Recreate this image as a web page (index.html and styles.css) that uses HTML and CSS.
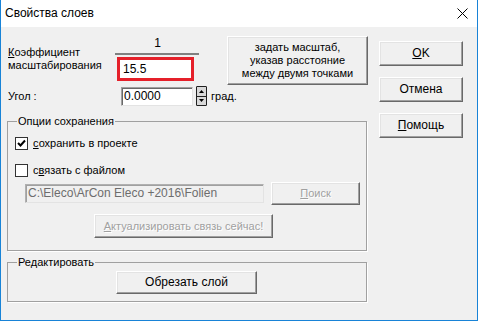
FILE: index.html
```html
<!DOCTYPE html>
<html lang="ru">
<head>
<meta charset="utf-8">
<title>Свойства слоев</title>
<link rel="stylesheet" href="styles.css">
</head>
<body>
<div class="window">
  <div class="titlebar">
    <span class="title">Свойства слоев</span>
    <svg class="close" width="11" height="11" viewBox="0 0 11 11"><path d="M0.5 0.5 L10.5 10.5 M10.5 0.5 L0.5 10.5" stroke="#000" stroke-width="1" fill="none"/></svg>
  </div>
  <div class="body">
    <div class="main">
      <div class="top">
        <div class="params">
          <div class="row-scale">
            <div class="label-scale"><u>К</u>оэффициент<br>масштабирования</div>
            <div class="fraction">
              <div class="numerator">1</div>
              <div class="frac-line"></div>
              <div class="highlight"><div class="field field-scale">15.5</div></div>
            </div>
          </div>
          <div class="row-angle">
            <span class="label-angle">Угол :</span>
            <div class="field field-angle">0.0000</div>
            <div class="spinner">
              <div class="spin-btn"><svg width="5" height="3" viewBox="0 0 5 3"><path d="M2.5 0 L5 3 L0 3 Z" fill="#000"/></svg></div>
              <div class="spin-btn"><svg width="5" height="3" viewBox="0 0 5 3"><path d="M0 0 L5 0 L2.5 3 Z" fill="#000"/></svg></div>
            </div>
            <span class="unit">град.</span>
          </div>
        </div>
        <button class="btn btn-scale">задать масштаб,<br>указав расстояние<br>между двумя точками</button>
      </div>

      <fieldset class="group group-save">
        <legend>Опции сохранения</legend>
        <div class="check-row first">
          <span class="checkbox checked"><svg width="9" height="9" viewBox="0 0 9 9"><path d="M1 4 L3.5 6.5 L8 1.5" stroke="#000" stroke-width="2" fill="none"/></svg></span>
          <span><u>с</u>охранить в проекте</span>
        </div>
        <div class="check-row second">
          <span class="checkbox"></span>
          <span>с<u>в</u>язать с файлом</span>
        </div>
        <div class="path-row">
          <div class="field field-path">C:\Eleco\ArCon Eleco +2016\Folien</div>
          <button class="btn btn-search" disabled><u>П</u>оиск</button>
        </div>
        <div class="update-row">
          <button class="btn btn-update" disabled><u>А</u>ктуализировать связь сейчас!</button>
        </div>
      </fieldset>

      <fieldset class="group group-edit">
        <legend>Редактировать</legend>
        <div class="edit-row">
          <button class="btn btn-cut">Обрезать слой</button>
        </div>
      </fieldset>
    </div>

    <div class="side">
      <button class="btn btn-side"><u>О</u>K</button>
      <button class="btn btn-side">Отмена</button>
      <button class="btn btn-side"><u>П</u>омощь</button>
    </div>
  </div>
</div>
</body>
</html>
```

FILE: styles.css
```css
* { box-sizing: border-box; }

html, body {
  margin: 0;
  padding: 0;
  background: #f0f0f0;
}

body {
  font-family: "Liberation Sans", Arial, sans-serif;
  font-size: 11px;
  line-height: 13px;
  color: #000;
}

.window {
  width: 478px;
  height: 321px;
  border: 1px solid #1883d7;
  border-top: none;
  background: #f0f0f0;
  display: flex;
  flex-direction: column;
}

.titlebar {
  height: 27px;
  background: #fff;
  display: flex;
  align-items: center;
  justify-content: space-between;
  padding: 0 9px 2px 4px;
}

.title {
  font-size: 12px;
  line-height: 14px;
}

.close {
  display: block;
  margin-top: 1px;
}

.body {
  display: flex;
  padding: 9px 0 0 6px;
}

.main {
  width: 360px;
  flex-shrink: 0;
}

/* top area */
.top {
  display: flex;
}

.params {
  width: 220px;
  flex-shrink: 0;
}

.row-scale {
  display: flex;
  height: 50px;
}

.label-scale {
  width: 108px;
  flex-shrink: 0;
  padding-left: 1px;
  margin-top: 10px;
}

.fraction {
  width: 84px;
  flex-shrink: 0;
  display: flex;
  flex-direction: column;
}

.numerator {
  text-align: center;
  margin-top: 1px;
  padding-left: 1px;
  font-size: 12px;
}

.frac-line {
  height: 2px;
  background: #808080;
  margin-top: 3px;
}

.highlight {
  margin: 2px 0 0 2px;
  width: 77px;
  height: 24px;
  border: 3px solid #e5202a;
  background: #fff;
}

.field {
  background: #fff;
  font-size: 12px;
  white-space: nowrap;
  overflow: hidden;
  flex-shrink: 0;
}

.field-scale {
  height: 18px;
  line-height: 18px;
  padding-left: 3px;
}

.row-angle {
  display: flex;
  align-items: center;
  height: 20px;
}

.row-angle > * { flex-shrink: 0; }

.label-angle {
  width: 114px;
  padding-left: 1px;
  padding-top: 1px;
}

.field-angle {
  width: 72px;
  height: 19px;
  line-height: 17px;
  padding-left: 2px;
  border-top: 1px solid #a0a0a0;
  border-left: 1px solid #a0a0a0;
  border-right: 1px solid #e3e3e3;
  border-bottom: 1px solid #e3e3e3;
  box-shadow: inset 1px 1px 0 #696969;
}

.spinner {
  margin-left: 3px;
  width: 11px;
  height: 20px;
  border: 1px solid #202020;
  border-radius: 1px;
  display: flex;
  flex-direction: column;
  background: #202020;
  gap: 1px;
}

.spin-btn {
  flex: 1;
  background: #d8d8d8;
  display: flex;
  align-items: center;
  justify-content: center;
}

.spin-btn svg { display: block; }

.unit {
  margin-left: 4px;
  padding-top: 1px;
}

/* buttons */
.btn {
  font-family: "Liberation Sans", Arial, sans-serif;
  font-size: 11px;
  line-height: 13px;
  color: #000;
  background: #f0f0f0;
  border-top: 1px solid #fff;
  border-left: 1px solid #fff;
  border-right: 1px solid #696969;
  border-bottom: 1px solid #696969;
  box-shadow: inset -1px -1px 0 #a0a0a0, inset 1px 1px 0 #e3e3e3;
  padding: 0;
  margin: 0;
  text-align: center;
  flex-shrink: 0;
}

.btn:disabled {
  color: #a0a0a0;
  text-shadow: 1px 1px 0 #fff;
}

.btn-scale {
  width: 141px;
  height: 49px;
  padding-bottom: 1px;
}

/* groups */
.group {
  margin: 0;
  padding: 0 0 0 1px;
  border: 1px solid #a0a0a0;
  box-shadow: 1px 1px 0 #fff;
  min-width: 0;
}

.group legend {
  margin-left: 8px;
  padding: 0 1px;
  line-height: 13px;
}

.group-save {
  margin-top: 9px;
  padding-bottom: 12px;
}

.check-row {
  display: flex;
  align-items: center;
  height: 13px;
  margin-left: 6px;
}

.check-row.first { margin-top: 9px; }
.check-row.second { margin-top: 14px; }

.checkbox {
  width: 13px;
  height: 13px;
  background: #fff;
  border: 1px solid #333;
  margin-right: 5px;
  display: flex;
  align-items: center;
  justify-content: center;
}

.checkbox svg { display: block; }

.path-row {
  display: flex;
  align-items: center;
  margin-top: 5px;
  height: 23px;
}

.field-path {
  margin-left: 16px;
  width: 239px;
  height: 19px;
  line-height: 17px;
  padding-left: 2px;
  background: #f0f0f0;
  color: #6d6d6d;
  border: 1px solid #b0b0b0;
  border-right-color: #e3e3e3;
  border-bottom-color: #e3e3e3;
  box-shadow: inset 1px 1px 0 #a0a0a0;
}

.btn-search {
  margin-left: 7px;
  width: 89px;
  height: 23px;
}

.update-row {
  margin-top: 9px;
  display: flex;
}

.btn-update {
  margin-left: 85px;
  width: 179px;
  height: 24px;
}

.group-edit {
  margin-top: 5px;
  padding-bottom: 7px;
}

.edit-row {
  display: flex;
  margin-top: 2px;
}

.btn-cut {
  margin-left: 107px;
  width: 141px;
  height: 23px;
  font-size: 12px;
}

/* right column */
.side {
  margin-left: 12px;
  padding-top: 5px;
  display: flex;
  flex-direction: column;
  gap: 11px;
}

.btn-side {
  width: 84px;
  height: 25px;
  font-size: 12px;
}
```
